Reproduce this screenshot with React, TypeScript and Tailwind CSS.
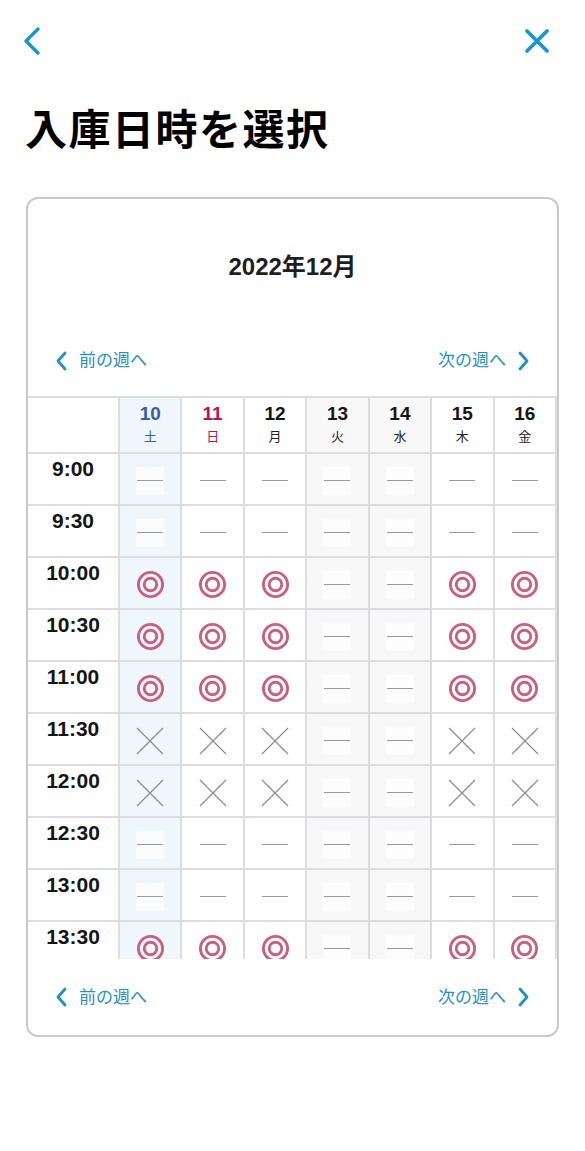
import React from "react";

type Mark = "o" | "x" | "-";

const days = [
  { d: "10", w: "土", tone: "sat" },
  { d: "11", w: "日", tone: "sun" },
  { d: "12", w: "月", tone: "" },
  { d: "13", w: "火", tone: "off" },
  { d: "14", w: "水", tone: "off" },
  { d: "15", w: "木", tone: "" },
  { d: "16", w: "金", tone: "" },
];

const open: Mark[] = ["o", "o", "o", "-", "-", "o", "o"];
const full: Mark[] = ["x", "x", "x", "-", "-", "x", "x"];
const none: Mark[] = ["-", "-", "-", "-", "-", "-", "-"];

const rows: { t: string; m: Mark[] }[] = [
  { t: "9:00", m: none },
  { t: "9:30", m: none },
  { t: "10:00", m: open },
  { t: "10:30", m: open },
  { t: "11:00", m: open },
  { t: "11:30", m: full },
  { t: "12:00", m: full },
  { t: "12:30", m: none },
  { t: "13:00", m: none },
  { t: "13:30", m: open },
];

const colBg = (tone: string) =>
  tone === "sat" ? "bg-[#eff7fc]" : tone === "off" ? "bg-[#f8f8f9]" : "bg-white";

function Chevron({ dir }: { dir: "l" | "r" }) {
  return (
    <svg width="14" height="22" viewBox="0 0 14 22" fill="none">
      <path
        d={dir === "l" ? "M11 3 L4 11 L11 19" : "M3 3 L10 11 L3 19"}
        stroke="#2290c4"
        strokeWidth="2.8"
        strokeLinecap="round"
        strokeLinejoin="round"
      />
    </svg>
  );
}

function WeekNav() {
  return (
    <div className="flex items-center justify-between px-[26px] text-[17px] text-[#2a8fbf]">
      <button className="flex items-center gap-[11px]">
        <Chevron dir="l" />
        <span>前の週へ</span>
      </button>
      <button className="flex items-center gap-[11px]">
        <span>次の週へ</span>
        <Chevron dir="r" />
      </button>
    </div>
  );
}

function Symbol({ m }: { m: Mark }) {
  if (m === "o")
    return (
      <svg width="29" height="29" viewBox="0 0 30 30">
        <circle cx="15" cy="15" r="12.5" fill="none" stroke="#c9607f" strokeWidth="3" />
        <circle cx="15" cy="15" r="6.5" fill="none" stroke="#c9607f" strokeWidth="3" />
      </svg>
    );
  if (m === "x")
    return (
      <svg width="28" height="28" viewBox="0 0 28 28">
        <path d="M1 1 L27 27 M27 1 L1 27" stroke="#8c8c8c" strokeWidth="1.2" />
      </svg>
    );
  return (
    <div className="flex h-[28px] w-[28px] items-center justify-center bg-white/70">
      <div className="h-px w-[26px] bg-[#9a9a9a]" />
    </div>
  );
}

export default function App() {
  return (
    <div className="min-h-[1151px] w-[585px] bg-white font-['Liberation_Sans','Noto_Sans_CJK_JP',sans-serif] text-[#111]">
      <header className="flex h-[82px] items-center justify-between pl-[23px] pr-[35px]">
        <svg width="18" height="30" viewBox="0 0 18 30" fill="none">
          <path d="M15 3 L3 15 L15 27" stroke="#1b95d2" strokeWidth="3.4" strokeLinecap="round" strokeLinejoin="round" />
        </svg>
        <svg width="26" height="26" viewBox="0 0 26 26" fill="none">
          <path d="M3 3 L23 23 M23 3 L3 23" stroke="#1b95d2" strokeWidth="3.8" strokeLinecap="round" />
        </svg>
      </header>

      <h1 className="px-[25px] pt-[22px] text-[42px] font-bold leading-[54px] tracking-[1.5px] text-black">
        入庫日時を選択
      </h1>

      <div className="mx-[26px] mt-[39px] overflow-hidden rounded-[12px] border-2 border-[#c9c9c9]">
        <div className="pt-[53px] text-center text-[24px] font-bold leading-[30px] text-[#1e1e1e]">2022年12月</div>
        <div className="mt-[66px]">
          <WeekNav />
        </div>

        <div className="mt-[22px] h-[563px] overflow-hidden">
          <div className="grid grid-cols-[90px_repeat(7,1fr)] gap-[2px] bg-[#dcdde1] py-[2px] pr-[2px]">
            <div className="h-[54px] bg-white" />
            {days.map((d) => (
              <div key={d.d} className={`flex h-[54px] flex-col items-center pt-[3px] ${colBg(d.tone)}`}>
                <span
                  className={`text-[19px] font-bold leading-[26px] ${
                    d.tone === "sat" ? "text-[#3b5ba6]" : d.tone === "sun" ? "text-[#b3164d]" : "text-[#151515]"
                  }`}
                >
                  {d.d}
                </span>
                <span
                  className={`text-[13px] leading-[20px] ${
                    d.tone === "sat" ? "text-[#3b5ba6]" : d.tone === "sun" ? "text-[#b3164d]" : "text-[#222]"
                  }`}
                >
                  {d.w}
                </span>
              </div>
            ))}
            {rows.map((r) => (
              <React.Fragment key={r.t}>
                <div className="h-[50px] bg-white pt-[3px] text-center text-[21px] font-bold leading-[24px] text-[#151515]">
                  {r.t}
                </div>
                {r.m.map((m, i) => (
                  <div key={i} className={`flex h-[50px] items-center justify-center pt-[4px] ${colBg(days[i].tone)}`}>
                    <Symbol m={m} />
                  </div>
                ))}
              </React.Fragment>
            ))}
          </div>
        </div>

        <div className="pb-[25px] pt-[26px]">
          <WeekNav />
        </div>
      </div>
    </div>
  );
}
